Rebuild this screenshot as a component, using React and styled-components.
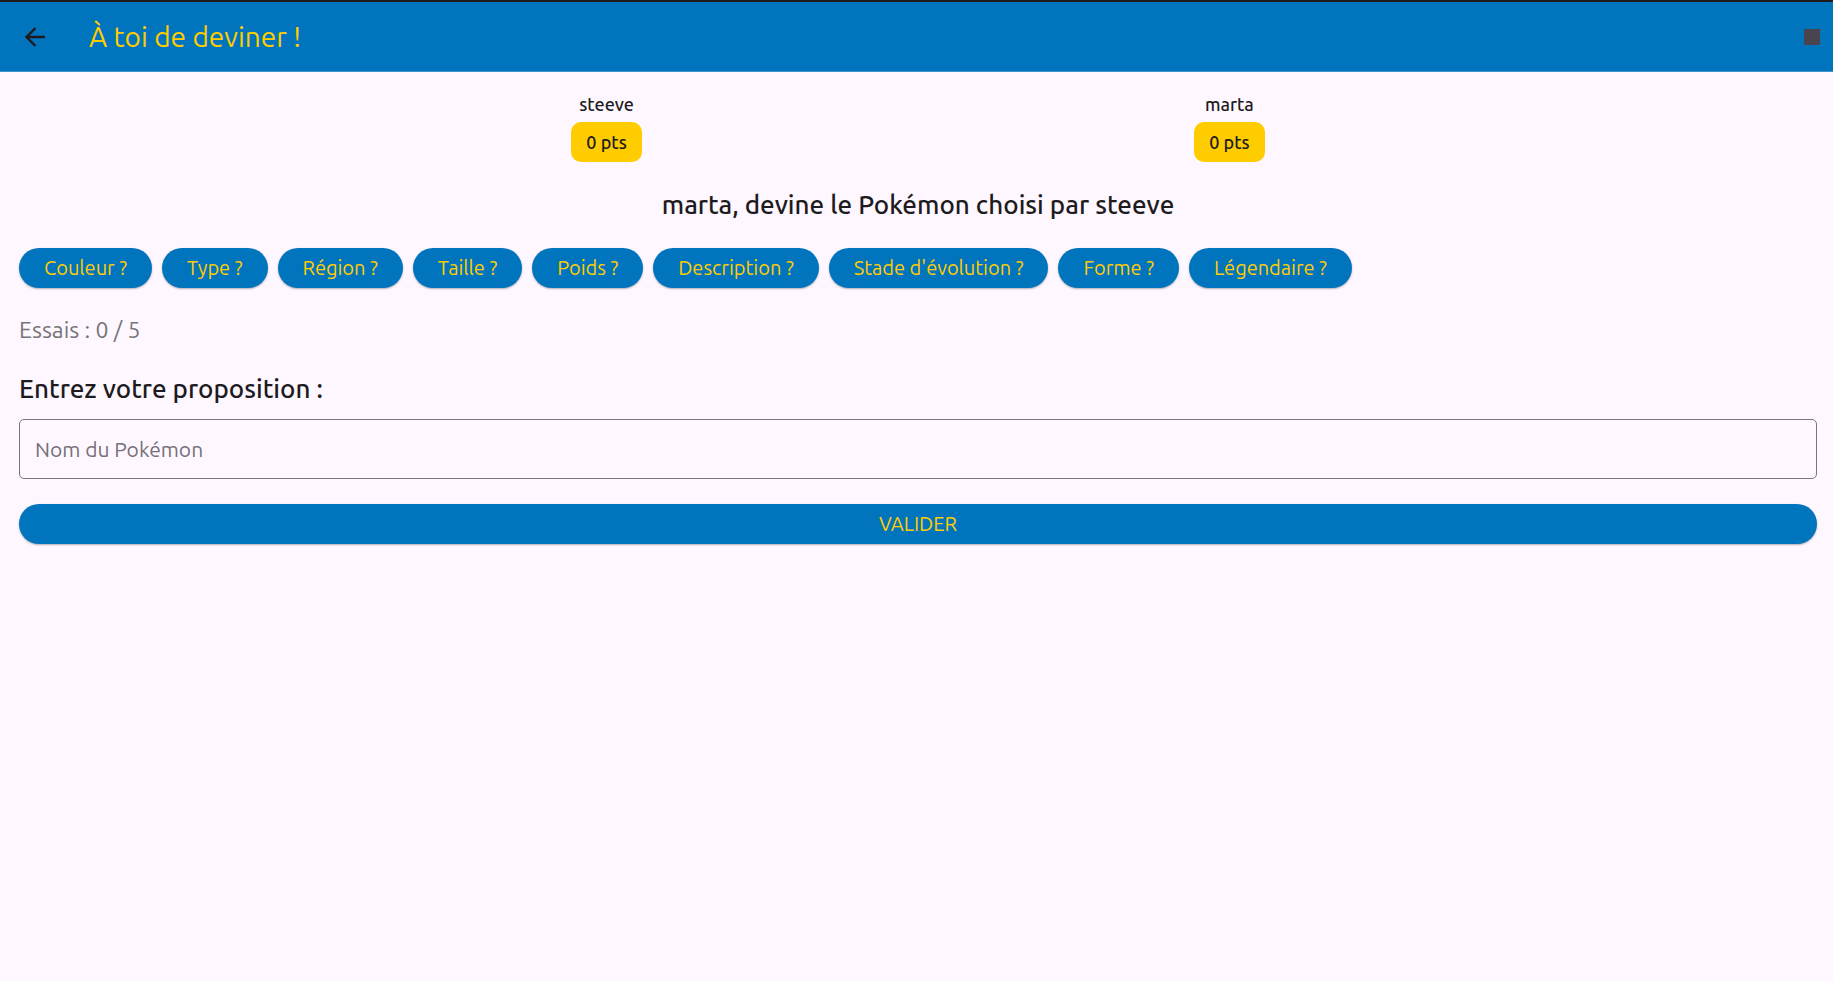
import React, { useState } from "react";
import styled, { createGlobalStyle } from "styled-components";

const GlobalStyle = createGlobalStyle`
  *, *::before, *::after { box-sizing: border-box; }
  body {
    margin: 0;
    background: #fef7ff;
    color: #1d1b20;
    font-family: Ubuntu, "Noto Sans", "Open Sans", sans-serif;
  }
  button, input { font: inherit; }
`;

const TopBar = styled.header`
  display: flex;
  align-items: center;
  height: 72px;
  padding: 0 13px 0 20px;
  background: #0075be;
  border-top: 2px solid #1d1b20;
  border-bottom: 1px solid #3c95cd;
`;

const BackButton = styled.button`
  display: flex;
  padding: 0;
  border: 0;
  background: none;
  color: #1d1b20;
  cursor: pointer;
`;

const Title = styled.h1`
  flex: 1;
  margin: 0 0 0 39px;
  color: #ffcc00;
  font-size: 28px;
  line-height: 36px;
  font-weight: 400;
`;

const StopButton = styled.button`
  width: 16px;
  height: 16px;
  padding: 0;
  border: 0;
  background: #49454f;
  cursor: pointer;
`;

const Content = styled.main`
  display: flex;
  flex-direction: column;
  padding: 20px 16px 20px 19px;
`;

const Scores = styled.section`
  display: flex;
  justify-content: space-evenly;
`;

const Player = styled.div`
  display: flex;
  flex-direction: column;
  align-items: center;
  gap: 6px;
  font-size: 18px;
  line-height: 24px;
  font-weight: 500;
`;

const Points = styled.span`
  padding: 8px 15px;
  border-radius: 10px;
  background: #ffcc00;
`;

const Prompt = styled.h2`
  margin: 27px 0 0;
  font-size: 26px;
  line-height: 32px;
  font-weight: 500;
  text-align: center;
`;

const Hints = styled.div`
  display: flex;
  flex-wrap: wrap;
  gap: 10px;
  margin-top: 27px;
`;

const PillButton = styled.button`
  height: 40px;
  padding: 0 25px;
  border: 0;
  border-radius: 20px;
  background: #0075be;
  color: #ffcc00;
  font-size: 20px;
  line-height: 24px;
  box-shadow: 0 1px 2px rgba(0, 0, 0, 0.3);
  cursor: pointer;
`;

const Attempts = styled.p`
  margin: 26px 0 0;
  color: #757575;
  font-size: 23px;
  line-height: 32px;
`;

const Form = styled.form`
  display: flex;
  flex-direction: column;
  margin-top: 27px;
`;

const Label = styled.label`
  font-size: 26px;
  line-height: 32px;
  font-weight: 500;
`;

const TextInput = styled.input`
  height: 60px;
  margin: 14px 0 25px;
  padding: 0 15px;
  border: 1px solid #79747e;
  border-radius: 5px;
  background: transparent;
  color: #1d1b20;
  font-size: 21px;
  &::placeholder { color: #757078; opacity: 1; }
`;

const hints = [
  "Couleur ?",
  "Type ?",
  "Région ?",
  "Taille ?",
  "Poids ?",
  "Description ?",
  "Stade d'évolution ?",
  "Forme ?",
  "Légendaire ?",
];

const players = [
  { name: "steeve", points: 0 },
  { name: "marta", points: 0 },
];

export default function App() {
  const [guess, setGuess] = useState("");

  return (
    <>
      <GlobalStyle />
      <TopBar>
        <BackButton type="button" aria-label="Retour">
          <svg width="30" height="30" viewBox="0 0 30 30" fill="none" stroke="currentColor" strokeWidth="2.4" aria-hidden="true">
            <path d="M25 15H6.5M15.5 6L6.5 15l9 9" />
          </svg>
        </BackButton>
        <Title>À toi de deviner !</Title>
        <StopButton type="button" aria-label="Arrêter" />
      </TopBar>
      <Content>
        <Scores>
          {players.map((player) => (
            <Player key={player.name}>
              <span>{player.name}</span>
              <Points>{player.points} pts</Points>
            </Player>
          ))}
        </Scores>
        <Prompt>marta, devine le Pokémon choisi par steeve</Prompt>
        <Hints>
          {hints.map((hint) => (
            <PillButton type="button" key={hint}>{hint}</PillButton>
          ))}
        </Hints>
        <Attempts>Essais : 0 / 5</Attempts>
        <Form onSubmit={(event) => event.preventDefault()}>
          <Label htmlFor="guess">Entrez votre proposition :</Label>
          <TextInput
            id="guess"
            type="text"
            placeholder="Nom du Pokémon"
            value={guess}
            onChange={(event) => setGuess(event.target.value)}
          />
          <PillButton type="submit">VALIDER</PillButton>
        </Form>
      </Content>
    </>
  );
}
